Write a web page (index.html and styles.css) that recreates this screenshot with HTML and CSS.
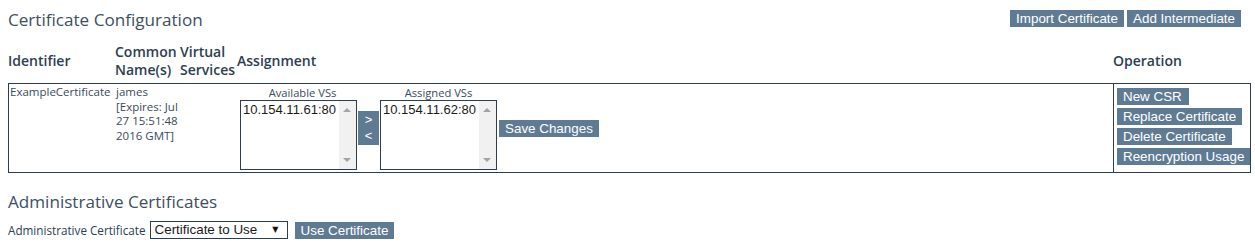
FILE: index.html
```html
<!DOCTYPE html>
<html lang="en">
<head>
<meta charset="utf-8">
<title>Certificate Configuration</title>
<link rel="stylesheet" href="styles.css">
</head>
<body>
<div class="page">
  <div class="top-bar">
    <h2 class="section-title">Certificate Configuration</h2>
    <div class="top-actions">
      <button class="btn">Import Certificate</button>
      <button class="btn">Add Intermediate</button>
    </div>
  </div>

  <div class="cert-table">
    <div class="thead">
      <div class="th">Identifier</div>
      <div class="th">Common<br>Name(s)</div>
      <div class="th">Virtual<br>Services</div>
      <div class="th">Assignment</div>
      <div class="th">Operation</div>
    </div>
    <div class="trow">
      <div class="td td-id">ExampleCertificate</div>
      <div class="td td-cn">james<br>[Expires: Jul<br>27 15:51:48<br>2016 GMT]</div>
      <div class="td td-vs"></div>
      <div class="td td-assign">
        <div class="vs-group">
          <div class="vs-label vs-label-avail">Available VSs</div>
          <div class="listbox">
            <div class="listbox-items"><div class="listbox-item">10.154.11.61:80</div></div>
            <div class="scrollbar">
              <span class="arrow-up"></span>
              <span class="arrow-down"></span>
            </div>
          </div>
        </div>
        <button class="btn btn-move"><span>&gt;</span><span>&lt;</span></button>
        <div class="vs-group">
          <div class="vs-label">Assigned VSs</div>
          <div class="listbox">
            <div class="listbox-items"><div class="listbox-item">10.154.11.62:80</div></div>
            <div class="scrollbar">
              <span class="arrow-up"></span>
              <span class="arrow-down"></span>
            </div>
          </div>
        </div>
        <button class="btn btn-save">Save Changes</button>
      </div>
      <div class="td td-ops">
        <button class="btn btn-csr">New CSR</button>
        <button class="btn">Replace Certificate</button>
        <button class="btn">Delete Certificate</button>
        <button class="btn">Reencryption Usage</button>
      </div>
    </div>
  </div>

  <h2 class="section-title admin-title">Administrative Certificates</h2>
  <div class="admin-row">
    <span class="admin-label">Administrative Certificate</span>
    <div class="dropdown">
      <span class="dropdown-text">Certificate to Use</span>
      <span class="dropdown-caret">&#9660;</span>
    </div>
    <button class="btn btn-use">Use Certificate</button>
  </div>
</div>
</body>
</html>
```

FILE: styles.css
```css
* {
  box-sizing: border-box;
}

html, body {
  margin: 0;
  padding: 0;
  background: #ffffff;
}

body {
  font-family: "Open Sans", "Noto Sans", sans-serif;
  color: #3a4a5c;
}

.page {
  padding: 8px;
  width: 1255px;
}

.top-bar {
  display: flex;
  justify-content: space-between;
  align-items: flex-start;
  height: 24px;
}

.section-title {
  margin: 0;
  font-size: 17.1px;
  font-weight: 400;
  line-height: 24px;
  color: #3d4f61;
}

.top-actions {
  display: flex;
  gap: 3px;
  margin-top: 2px;
  margin-right: 6px;
}

.btn {
  display: inline-block;
  border: none;
  margin: 0;
  padding: 0 6px;
  height: 17px;
  line-height: 17px;
  background: #5f7b93;
  color: #ffffff;
  font-family: "Liberation Sans", Arial, sans-serif;
  font-size: 13.4px;
  white-space: nowrap;
  text-align: left;
  cursor: pointer;
}

.btn-csr {
  padding: 0 7px 0 6px;
}

.cert-table {
  width: 1243px;
  margin-top: 11px;
}

.thead {
  display: grid;
  grid-template-columns: 107px 65px 57px 876px 138px;
  align-items: center;
  height: 40px;
  padding-bottom: 4px;
}

.th {
  font-size: 14px;
  font-weight: 600;
  line-height: 18px;
  color: #2c3e50;
  white-space: nowrap;
}

.trow {
  display: grid;
  grid-template-columns: 106px 65px 57px 876px 137px;
  height: 90px;
  border: 1px solid #2c3e50;
}

.td {
  font-size: 11.5px;
  line-height: 14.5px;
  color: #3a4a5c;
}

.td-id {
  padding: 1px 0 0 1px;
  white-space: nowrap;
}

.td-cn {
  padding: 1px 0 0 1px;
  white-space: nowrap;
}

.td-assign {
  display: flex;
  align-items: center;
  padding-left: 3px;
}

.vs-group {
  display: flex;
  flex-direction: column;
  align-items: center;
  width: 117px;
}

.vs-label {
  font-size: 11.2px;
  line-height: 14px;
  height: 14px;
  color: #3a4a5c;
  white-space: nowrap;
}

.vs-label-avail {
  padding-left: 8px;
}

.listbox {
  display: flex;
  width: 117px;
  height: 70px;
  border: 1px solid #2c3e50;
  background: #ffffff;
}

.listbox-items {
  flex: 1;
  padding: 1px 0 0 2px;
}

.listbox-item {
  font-family: "Liberation Sans", Arial, sans-serif;
  font-size: 13px;
  line-height: 15px;
  color: #1a1a1a;
  white-space: nowrap;
}

.scrollbar {
  position: relative;
  width: 17px;
  background: #f1f1f1;
}

.arrow-up,
.arrow-down {
  position: absolute;
  left: 4px;
  width: 0;
  height: 0;
  border-left: 4px solid transparent;
  border-right: 4px solid transparent;
}

.arrow-up {
  top: 7px;
  border-bottom: 4px solid #a3a3a3;
}

.arrow-down {
  bottom: 7px;
  border-top: 4px solid #a3a3a3;
}

.btn-move {
  display: flex;
  flex-direction: column;
  align-items: center;
  justify-content: center;
  width: 21px;
  height: 34px;
  padding: 0;
  margin: 0 1px 0 1px;
  line-height: 16px;
  font-size: 13px;
}

.btn-move span {
  display: block;
  height: 16px;
}

.btn-save {
  margin-left: 2px;
}

.td-ops {
  border-left: 1px solid #2c3e50;
  padding: 4px 0 0 3px;
  display: flex;
  flex-direction: column;
  align-items: flex-start;
  gap: 3px;
}

.admin-title {
  margin-top: 17px;
}

.admin-row {
  display: flex;
  align-items: center;
  margin-top: 7px;
  height: 18px;
}

.admin-label {
  font-size: 11.7px;
  line-height: 18px;
  color: #2c3e50;
  white-space: nowrap;
}

.dropdown {
  display: flex;
  align-items: center;
  justify-content: space-between;
  width: 138px;
  height: 18px;
  margin-left: 4px;
  padding: 0 8px 0 4px;
  border: 1px solid #2c3e50;
  background: #ffffff;
}

.dropdown-text {
  font-family: "Liberation Sans", Arial, sans-serif;
  font-size: 13.4px;
  line-height: 16px;
  color: #1a1a1a;
  white-space: nowrap;
}

.dropdown-caret {
  font-family: "DejaVu Sans", sans-serif;
  font-size: 8px;
  line-height: 16px;
  color: #111111;
}

.btn-use {
  margin-left: 7px;
}
```
